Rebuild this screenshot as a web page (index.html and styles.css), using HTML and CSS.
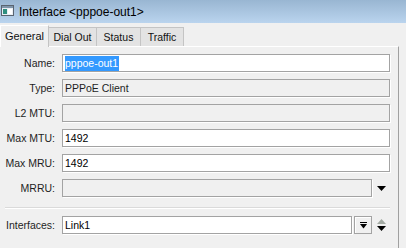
FILE: index.html
```html
<html>
  <head>
    <link rel="stylesheet" href="styles.css">
  </head>
  <body>
    <div class="window">
      <div class="titlebar">
        <svg class="titlebar__icon" width="13" height="11" viewBox="0 0 13 11">
          <rect x="0.5" y="0.5" width="12" height="10" fill="#e8eef4" stroke="#5a6470"/>
          <rect x="1" y="1" width="11" height="2" fill="#7f95aa"/>
          <rect x="2" y="4" width="4" height="5" fill="#2f8f7f"/>
          <rect x="7" y="4" width="4" height="5" fill="#ffffff"/>
        </svg>
        <span class="titlebar__text">Interface &lt;pppoe-out1&gt;</span>
      </div>
      <div class="tabs">
        <div class="tab tab--active">General</div>
        <div class="tab">Dial Out</div>
        <div class="tab">Status</div>
        <div class="tab">Traffic</div>
      </div>
      <div class="panel">
        <div class="row">
          <label class="row__label">Name:</label>
          <div class="field"><span class="selected">pppoe-out1</span></div>
          <div class="row__end"></div>
        </div>
        <div class="row">
          <label class="row__label">Type:</label>
          <div class="field field--disabled">PPPoE Client</div>
          <div class="row__end"></div>
        </div>
        <div class="row">
          <label class="row__label">L2 MTU:</label>
          <div class="field field--disabled"></div>
          <div class="row__end"></div>
        </div>
        <div class="row">
          <label class="row__label">Max MTU:</label>
          <div class="field">1492</div>
          <div class="row__end"></div>
        </div>
        <div class="row">
          <label class="row__label">Max MRU:</label>
          <div class="field">1492</div>
          <div class="row__end"></div>
        </div>
        <div class="row">
          <label class="row__label">MRRU:</label>
          <div class="field field--disabled field--short"></div>
          <div class="arrow-btn">
            <svg width="9" height="5" viewBox="0 0 9 5"><path d="M0 0H9L4.5 5Z" fill="#000"/></svg>
          </div>
        </div>
        <div class="separator"></div>
        <div class="row">
          <label class="row__label">Interfaces:</label>
          <div class="field field--short">Link1</div>
          <div class="drop-btn">
            <svg width="7" height="7" viewBox="0 0 7 7">
              <rect x="0" y="0" width="7" height="1" fill="#000"/>
              <path d="M0 2H7L3.5 6.5Z" fill="#000"/>
            </svg>
          </div>
          <div class="arrow-btn">
            <svg width="9" height="12" viewBox="0 0 9 12">
              <path d="M4.5 0L9 5H0Z" fill="#a3aaa3"/>
              <path d="M0 7H9L4.5 12Z" fill="#000"/>
            </svg>
          </div>
        </div>
      </div>
    </div>
  </body>
</html>
```

FILE: styles.css
```css
body {
	margin: 0;
	background-color: #f0f0f0;
	font-family: "Liberation Sans", Arial, sans-serif;
	font-size: 11px;
	color: #000;
}

.window {
	width: 406px;
	height: 248px;
	display: flex;
	flex-direction: column;
	overflow: hidden;
}

.titlebar {
	height: 23px;
	display: flex;
	align-items: center;
	gap: 5px;
	padding-left: 1px;
	background: linear-gradient(180deg, #99b6d2 0%, #bad4ee 100%);
}

.titlebar__icon {
	display: block;
	margin-top: -2px;
}

.titlebar__text {
	font-size: 12px;
	color: #000;
}

.tabs {
	height: 23px;
	display: flex;
	align-items: flex-end;
}

.tab {
	height: 19px;
	display: flex;
	align-items: center;
	justify-content: center;
	box-sizing: border-box;
	white-space: nowrap;
	font-size: 10.5px;
	background-color: #e3e3e3;
	border: 1px solid #c4c4c4;
	border-bottom: 0;
	margin-left: -1px;
	color: #111;
}

.tab:nth-child(2) {
	width: 49px;
}

.tab:nth-child(3) {
	width: 45px;
}

.tab:nth-child(4) {
	width: 44px;
}

.tab--active {
	height: 22px;
	width: 49px;
	margin-left: 0;
	background-color: #f0f0f0;
	border-color: #ffffff #c4c4c4 transparent #ffffff;
	position: relative;
	z-index: 1;
	margin-bottom: -1px;
	padding-bottom: 2px;
	font-size: 11px;
}

.panel {
	flex: 1;
	width: 399px;
	box-sizing: border-box;
	border-top: 1px solid #ffffff;
	border-right: 1px solid #a0a0a0;
	padding: 7px 7px 0 5px;
	display: flex;
	flex-direction: column;
	gap: 7px;
}

.row {
	display: flex;
	align-items: center;
	height: 18px;
}

.row__label {
	flex: none;
	width: 50px;
	text-align: right;
	white-space: nowrap;
	margin-right: 7px;
	font-size: 10.5px;
	color: #1e1e1e;
}

.row__end {
	width: 1px;
}

.field {
	flex: 1;
	height: 18px;
	box-sizing: border-box;
	border: 1px solid #a3a3a3;
	box-shadow: 1px 1px 0 #ffffff;
	background-color: #ffffff;
	padding-left: 2px;
	display: flex;
	align-items: center;
	white-space: nowrap;
	font-size: 10.5px;
}

.field--disabled {
	background-color: #f0f0f0;
	color: #1e1e1e;
}

.selected {
	background-color: #3399ff;
	color: #ffffff;
	padding: 1px 1px 1px 0;
	line-height: 13px;
}

.arrow-btn {
	flex: none;
	width: 19px;
	height: 18px;
	display: flex;
	align-items: center;
	justify-content: center;
}

.drop-btn {
	flex: none;
	width: 18px;
	height: 18px;
	box-sizing: border-box;
	margin-left: 2px;
	border: 1px solid #a3a3a3;
	box-shadow: inset 1px 1px 0 #ffffff;
	background-color: #f0f0f0;
	display: flex;
	align-items: center;
	justify-content: center;
}

.separator {
	height: 0;
	border-top: 1px solid #dadada;
	border-bottom: 1px solid #ffffff;
	margin: 3px 1px 0 0;
}
```
